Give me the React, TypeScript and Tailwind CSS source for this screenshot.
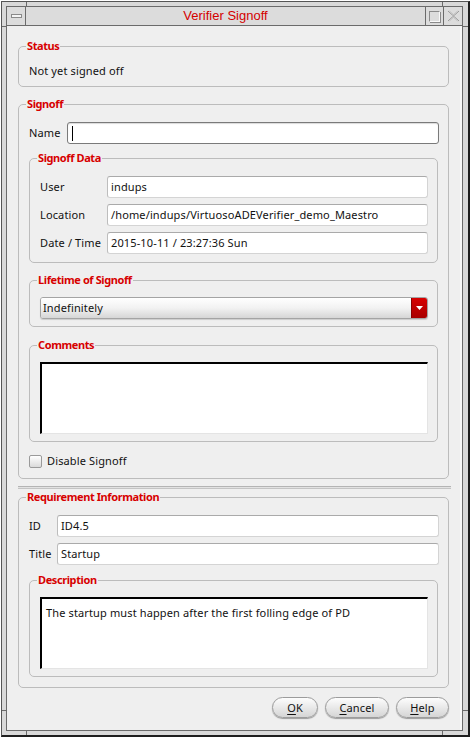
import type { ReactNode } from 'react';

const LINE = 'bg-[#6b6b6b]';

function GroupBox({ title, children, className = '' }: { title: string; children: ReactNode; className?: string }) {
  return (
    <fieldset className={`border border-[#bcbcbc] rounded-[5px] pl-[10px] pr-[9px] min-w-0 ${className}`}>
      <legend className="ml-[-3px] px-[1px] text-[11px] leading-[14px] font-bold tracking-[-0.4px] text-[#d70000]">{title}</legend>
      {children}
    </fieldset>
  );
}

function Field({ value, focused }: { value?: string; focused?: boolean }) {
  return (
    <div
      className={
        focused
          ? 'h-[22px] flex-1 flex items-center pl-[4px] bg-white rounded-[3px] border border-[#7a7a7a] shadow-[inset_0_1px_1px_rgba(0,0,0,0.15)]'
          : 'h-[22px] flex-1 flex items-center pl-[3px] bg-white rounded-[3px] border border-[#d4d4d4] border-t-[#aaaaaa] border-l-[#bdbdbd]'
      }
    >
      {focused ? <span className="w-px h-[15px] bg-black" /> : <span className="text-[11px] leading-[14px] text-[#111]">{value}</span>}
    </div>
  );
}

function TextArea({ value }: { value?: string }) {
  return (
    <div className="h-[72px] bg-white border-t-2 border-l-2 border-black border-r border-b border-r-[#e4e4e4] border-b-[#e4e4e4] px-[4px] pt-[7px] text-[11px] leading-[14px] text-[#111]">
      {value}
    </div>
  );
}

function Row({ label, labelWidth, children }: { label: string; labelWidth: string; children: ReactNode }) {
  return (
    <div className="flex items-center">
      <span className={`${labelWidth} shrink-0 text-[11px] leading-[14px] text-[#111]`}>{label}</span>
      {children}
    </div>
  );
}

function Button({ mnemonic, rest, width }: { mnemonic: string; rest: string; width: string }) {
  return (
    <div
      className={`${width} h-[21px] flex items-center justify-center rounded-full border border-[#9c9c9c] bg-gradient-to-b from-[#fdfdfd] to-[#d5d5d5] shadow-[0_1px_1px_rgba(0,0,0,0.35)] text-[11px] leading-[14px] text-[#111]`}
    >
      <span className="underline underline-offset-2">{mnemonic}</span>
      {rest}
    </div>
  );
}

export default function App() {
  return (
    <div className="w-[473px] h-[742px] bg-white pt-[1px] pl-[1px] font-['Noto_Sans',sans-serif] tracking-[0.13px]">
      <div className="relative w-[469px] h-[736px] bg-[#d9d9d9] border-l border-t border-[#555] border-r-2 border-b-2 border-r-[#1e1e1e] border-b-[#1e1e1e] pl-[4px] pr-[5px] pt-[4px] pb-[4px]">
        {/* resize handle marks */}
        <div className={`absolute left-[24px] top-0 w-px h-[5px] ${LINE}`} />
        <div className={`absolute left-[440px] top-0 w-px h-[5px] ${LINE}`} />
        <div className={`absolute left-[24px] bottom-0 w-px h-[5px] ${LINE}`} />
        <div className={`absolute left-[440px] bottom-0 w-px h-[5px] ${LINE}`} />
        <div className={`absolute left-0 top-[24px] h-px w-[4px] ${LINE}`} />
        <div className={`absolute right-0 top-[24px] h-px w-[5px] ${LINE}`} />
        <div className={`absolute left-0 top-[708px] h-px w-[4px] ${LINE}`} />
        <div className={`absolute right-0 top-[708px] h-px w-[5px] ${LINE}`} />

        <div className="h-full flex flex-col border border-[#6b6b6b]">
          {/* title bar */}
          <div className="h-[19px] shrink-0 flex bg-[#dcdcdc] border-b border-[#6b6b6b]">
            <div className="w-[19px] flex items-center justify-center border-r border-[#6b6b6b]">
              <div className="w-[11px] h-[4px] bg-[#f4f4f4] border border-[#8a8a8a]" />
            </div>
            <div className="flex-1 flex items-center justify-center font-['Liberation_Sans',sans-serif] tracking-normal text-[13px] text-[#d40000]">
              Verifier Signoff
            </div>
            <div className="w-[18px] flex items-center justify-center border-l border-[#6b6b6b]">
              <div className="w-[11px] h-[11px] border border-[#8a8a8a] border-r-[#f8f8f8] border-b-[#f8f8f8] shadow-[1px_1px_0_#8a8a8a]" />
            </div>
            <div className="w-[19px] flex items-center justify-center border-l border-[#6b6b6b]">
              <svg width="13" height="12" viewBox="0 0 13 12" fill="none">
                <path d="M1 1 L6.5 6 L1 11 M12 1 L6.5 6 L12 11" stroke="#9a9a9a" strokeWidth="1" />
                <path d="M2.5 1 L7.5 5.5 M10.5 1 L5.5 5.5 M2.5 11 L7.5 6.5 M10.5 11 L5.5 6.5" stroke="#c4c4c4" strokeWidth="1" />
              </svg>
            </div>
          </div>

          {/* client area */}
          <div className="flex-1 flex flex-col bg-[#efefef] border-r-2 border-[#f9f9f9] pl-[11px] pr-[11px] pt-[13px] text-[#111]">
            <GroupBox title="Status" className="pt-[11px] pb-[8px]">
              <div className="text-[11px] leading-[14px]">Not yet signed off</div>
            </GroupBox>

            <GroupBox title="Signoff" className="mt-[10px] pt-[11px] pb-[10px]">
              <Row label="Name" labelWidth="w-[38px]">
                <Field focused />
              </Row>

              <GroupBox title="Signoff Data" className="mt-[7px] pt-[11px] pb-[8px] mr-[1px]">
                <div className="flex flex-col gap-[6px]">
                  <Row label="User" labelWidth="w-[67px]">
                    <Field value="indups" />
                  </Row>
                  <Row label="Location" labelWidth="w-[67px]">
                    <Field value="/home/indups/VirtuosoADEVerifier_demo_Maestro" />
                  </Row>
                  <Row label="Date / Time" labelWidth="w-[67px]">
                    <Field value="2015-10-11 / 23:27:36 Sun" />
                  </Row>
                </div>
              </GroupBox>

              <GroupBox title="Lifetime of Signoff" className="mt-[10px] pt-[10px] pb-[7px] mr-[1px]">
                <div className="h-[22px] flex rounded-[3px] border border-[#a4a4a4] overflow-hidden shadow-[0_1px_1px_rgba(0,0,0,0.15)]">
                  <div className="flex-1 flex items-center pl-[2px] bg-gradient-to-b from-[#ffffff] via-[#f2f2f2] to-[#d6d6d6] text-[11px] leading-[14px]">
                    Indefinitely
                  </div>
                  <div className="w-[16px] flex items-center justify-center bg-gradient-to-b from-[#d80000] to-[#a80000] border-l border-[#8a0000]">
                    <svg width="7" height="4" viewBox="0 0 7 4">
                      <path d="M0 0 H7 L3.5 4 Z" fill="#fff" />
                    </svg>
                  </div>
                </div>
              </GroupBox>

              <GroupBox title="Comments" className="mt-[11px] pt-[10px] pb-[7px] mr-[1px]">
                <TextArea />
              </GroupBox>

              <div className="mt-[12px] flex items-center h-[14px]">
                <div className="w-[13px] h-[13px] rounded-[2px] border border-[#9a9a9a] bg-gradient-to-b from-[#ffffff] to-[#dadada]" />
                <span className="ml-[5px] text-[11px] leading-[14px]">Disable Signoff</span>
              </div>
            </GroupBox>

            <div className="mt-[7px] mr-[-2px] h-[3px] border-t border-b border-t-[#b4b4b4] border-b-[#c4c4c4] bg-[#e2e2e2]" />

            <GroupBox title="Requirement Information" className="mt-[1px] pt-[11px] pb-[10px]">
              <div className="flex flex-col gap-[6px]">
                <Row label="ID" labelWidth="w-[28px]">
                  <Field value="ID4.5" />
                </Row>
                <Row label="Title" labelWidth="w-[28px]">
                  <Field value="Startup" />
                </Row>
              </div>
              <GroupBox title="Description" className="mt-[8px] pt-[10px] pb-[7px] mr-[1px]">
                <TextArea value="The startup must happen after the first folling edge of PD" />
              </GroupBox>
            </GroupBox>

            <div className="mt-[9px] flex justify-end gap-[7px]">
              <Button mnemonic="O" rest="K" width="w-[46px]" />
              <Button mnemonic="C" rest="ancel" width="w-[64px]" />
              <Button mnemonic="H" rest="elp" width="w-[53px]" />
            </div>
          </div>
        </div>
      </div>
    </div>
  );
}
